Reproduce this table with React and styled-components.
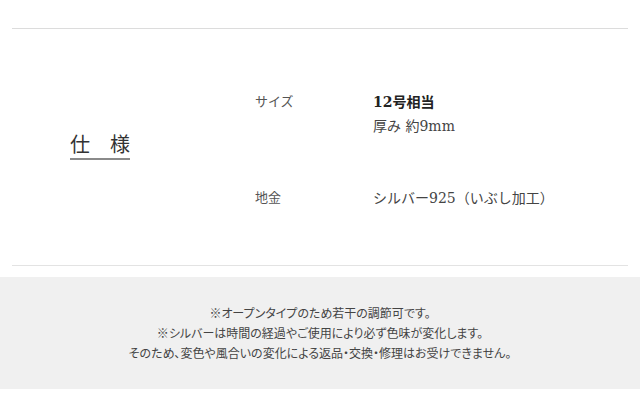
import React from "react";
import styled, { createGlobalStyle } from "styled-components";

const Global = createGlobalStyle`
  html, body { margin: 0; padding: 0; background: #fff; }
  body {
    font-family: "Liberation Serif", "Noto Sans CJK JP", serif;
    color: #333;
  }
`;

const Page = styled.div`
  width: 640px;
  padding-top: 28px;
`;

const SpecSection = styled.section`
  margin: 0 12px;
  border-top: 1px solid #dcdcdc;
  border-bottom: 1px solid #e3e3e3;
  display: flex;
  align-items: stretch;
`;

const HeadingCol = styled.div`
  width: 243px;
  padding-left: 58px;
  box-sizing: border-box;
  display: flex;
  align-items: center;
`;

const Heading = styled.h2`
  margin: 0;
  font-size: 20px;
  line-height: 20px;
  font-weight: 400;
  color: #333;
  padding-bottom: 3px;
  border-bottom: 2px solid #8a8a8a;
`;

const SpecTable = styled.dl`
  margin: 0;
  padding: 61px 0 55px;
  display: flex;
  flex-direction: column;
  gap: 48px;
`;

const SpecRow = styled.div`
  display: grid;
  grid-template-columns: 118px 1fr;
`;

const Label = styled.dt`
  font-size: 13px;
  line-height: 24px;
  color: #555;
`;

const Value = styled.dd`
  margin: 0;
  font-family: "DejaVu Serif", "Noto Sans CJK JP", serif;
  font-size: 14px;
  line-height: 24px;
  color: #444;
  font-weight: ${(p) => (p.$strong ? 700 : 400)};
  ${(p) => p.$strong && "color: #222;"}
`;

const Values = styled.div`
  display: flex;
  flex-direction: column;
`;

const Notice = styled.div`
  margin-top: 11px;
  height: 112px;
  box-sizing: border-box;
  padding-top: 27px;
  background: #f0f0f0;
  text-align: center;
`;

const NoticeLine = styled.p`
  margin: 0;
  font-size: 12px;
  line-height: 20px;
  color: #444;
  font-feature-settings: "palt";
`;

export default function App() {
  return (
    <>
      <Global />
      <Page>
        <SpecSection>
          <HeadingCol>
            <Heading>仕　様</Heading>
          </HeadingCol>
          <SpecTable>
            <SpecRow>
              <Label>サイズ</Label>
              <Values>
                <Value $strong>12号相当</Value>
                <Value>厚み 約9mm</Value>
              </Values>
            </SpecRow>
            <SpecRow>
              <Label>地金</Label>
              <Values>
                <Value>シルバー925（いぶし加工）</Value>
              </Values>
            </SpecRow>
          </SpecTable>
        </SpecSection>
        <Notice>
          <NoticeLine>※オープンタイプのため若干の調節可です。</NoticeLine>
          <NoticeLine>※シルバーは時間の経過やご使用により必ず色味が変化します。</NoticeLine>
          <NoticeLine>そのため、変色や風合いの変化による返品・交換・修理はお受けできません。</NoticeLine>
        </Notice>
      </Page>
    </>
  );
}
